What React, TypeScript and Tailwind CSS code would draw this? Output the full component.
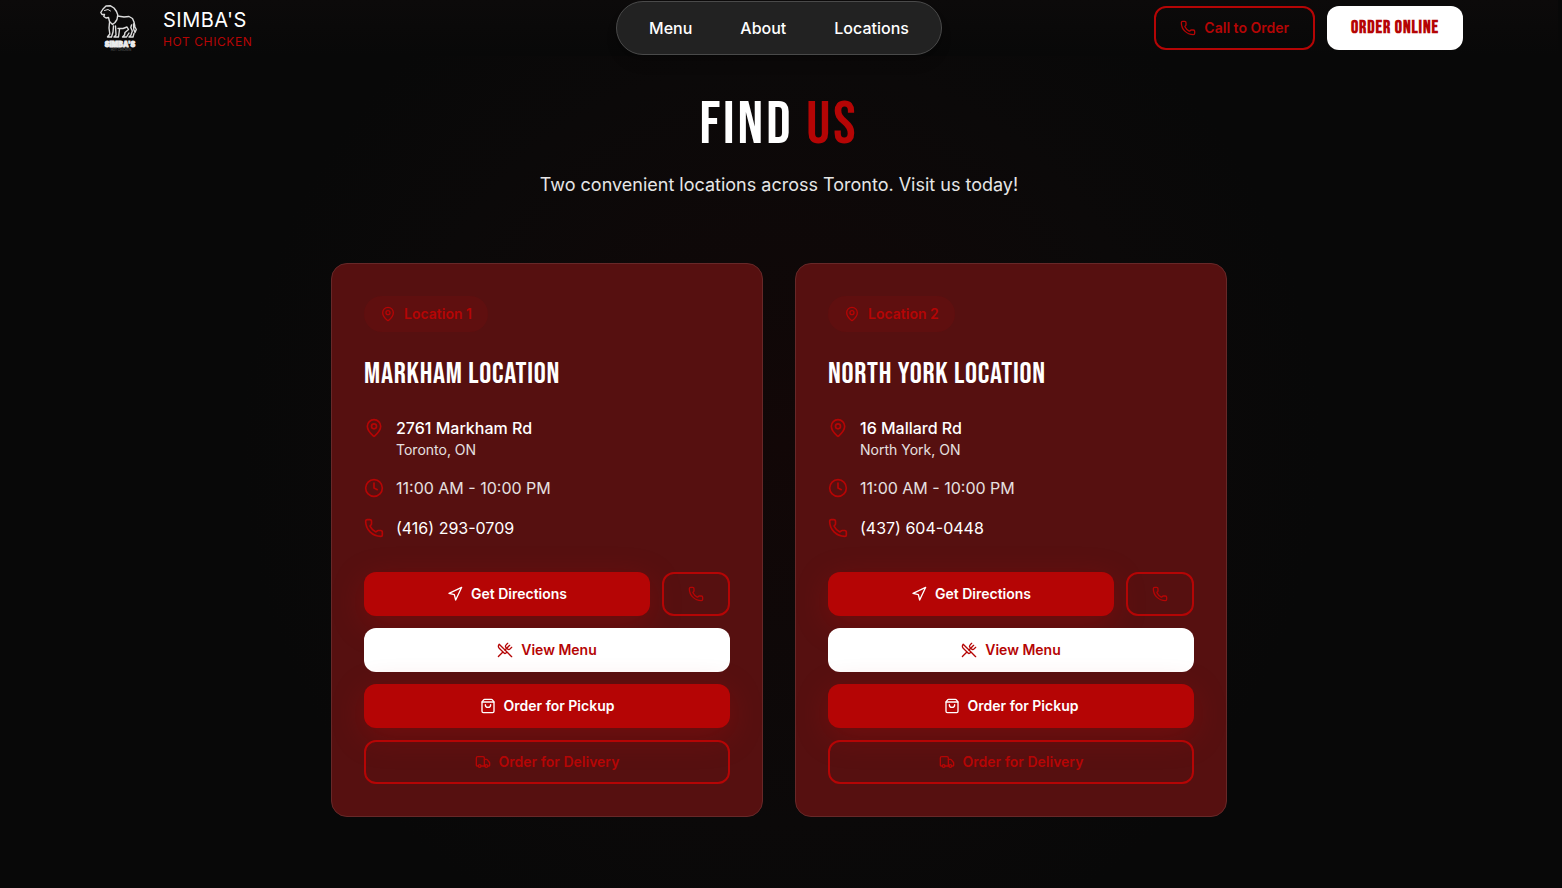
import React from "react";
import { Clock, MapPin, Navigation, Phone, ShoppingBag, Truck, UtensilsCrossed } from "lucide-react";

const display = "font-['Bebas_Neue','Liberation_Sans_Narrow',sans-serif]";

const buttonBase = "flex h-11 items-center justify-center gap-2 rounded-xl px-6 text-sm font-semibold";
const primary = "bg-[#b50505] text-white shadow-[0_8px_32px_rgba(181,5,5,0.3)]";
const outline = "border-2 border-[#b50505] text-[#b50505]";
const light = "bg-white text-[#b50505]";

const navItems = ["Menu", "About", "Locations"];

const locations = [
    {
        id: 1,
        name: "Markham Location",
        street: "2761 Markham Rd",
        city: "Toronto, ON",
        hours: "11:00 AM - 10:00 PM",
        phone: "(416) 293-0709",
    },
    {
        id: 2,
        name: "North York Location",
        street: "16 Mallard Rd",
        city: "North York, ON",
        hours: "11:00 AM - 10:00 PM",
        phone: "(437) 604-0448",
    },
];

function LionLogo() {
    return (
        <svg viewBox="0 0 50 56" className="h-14 w-[50px] shrink-0" fill="none" aria-hidden="true">
            <g stroke="#dcdcdc" strokeWidth="1.4" strokeLinecap="round" strokeLinejoin="round">
                {/* Head and mane */}
                <path d="M8 9 L11 6 L15.5 5.8 L19 8 L21.5 11.5 L22.8 15 L22 19.5 L20 22.5 L17.5 24.5 L14.5 21.5 L13.5 17.5 L11 18 L8.8 16.5 L9.5 14.5 L7 14.5 L5.8 12.5 Z" />
                <path d="M9.5 10.5 L13 9.5 L15.5 11" strokeWidth="1" />
                {/* Back, tail and legs */}
                <path d="M22.5 16 L29 17 L34 16.5 L37.5 18.5 L39 22 L40 27 L41.3 29.5 L40 32.5 L38.8 29.5 L38.5 24" />
                <path d="M14.5 22.5 L14 28 L14.8 34 L12.5 37 H16.5 L18 32 L18.5 26 M20.5 26 L21 35 L19 37 H23.5 L24.5 29.5" />
                <path d="M23 28.5 L28 28.5 L32 27 L33.5 29.5 L30 32.5 L29.5 35 L27.5 37 H31.5 L34 33 M36.5 25 L35.8 27.5 L37.3 31 L36 35 L34 37 H38 L39 33.5" />
            </g>
            <text x="25" y="47" textAnchor="middle" fontFamily="Inter, sans-serif" fontSize="7" fontWeight="900" fill="#eee" stroke="#eee" strokeWidth="0.8">SIMBA'S</text>
            <text x="26" y="51" textAnchor="middle" fontFamily="Inter, sans-serif" fontSize="3" fill="#666">HOT CHICKEN</text>
        </svg>
    );
}

function Header() {
    return (
        <header className="bg-gradient-to-b from-[#0c0a0a] to-[#080808]">
            <div className="mx-auto grid h-14 max-w-[1400px] grid-cols-[1fr_auto_1fr] items-center px-4">
                <a href="#home" className="flex items-center gap-[18px]">
                    <LionLogo />
                    <span className="flex flex-col pt-1">
                        <span className="text-xl leading-6 tracking-wide text-white">SIMBA'S</span>
                        <span className="text-xs leading-5 tracking-wider text-[#b50505]">HOT CHICKEN</span>
                    </span>
                </a>
                <nav className="flex h-[54px] items-center gap-12 rounded-full border border-[#4a4a4a] bg-[#222] px-8 shadow-lg">
                    {navItems.map((item) => (
                        <a key={item} href={`#${item.toLowerCase()}`} className="font-medium text-white">{item}</a>
                    ))}
                </nav>
                <div className="flex items-center justify-end gap-3">
                    <button type="button" className={`${buttonBase} ${outline}`}>
                        <Phone className="h-4 w-4" />
                        Call to Order
                    </button>
                    <button type="button" className={`flex h-11 items-center justify-center rounded-xl px-6 text-lg font-bold tracking-wider ${display} ${light}`}>
                        ORDER ONLINE
                    </button>
                </div>
            </div>
        </header>
    );
}

function LocationCard({ location }: { location: (typeof locations)[number] }) {
    return (
        <article className="rounded-2xl border border-[#672828] bg-[#561010] p-8">
            <div className="mb-6 flex w-fit items-center gap-2 rounded-full bg-[#b50505]/10 px-4 py-2 text-sm font-semibold text-[#b50505]">
                <MapPin className="h-4 w-4" />
                Location {location.id}
            </div>
            <h2 className={`mb-6 text-3xl leading-9 tracking-wide text-white uppercase ${display}`}>{location.name}</h2>

            <div className="mb-8 space-y-4">
                <div className="flex items-start gap-3">
                    <MapPin className="mt-0.5 h-5 w-5 text-[#b50505]" />
                    <div>
                        <p className="font-medium text-white">{location.street}</p>
                        <p className="text-sm text-[#e6e0e0]">{location.city}</p>
                    </div>
                </div>
                <div className="flex items-center gap-3">
                    <Clock className="h-5 w-5 text-[#b50505]" />
                    <p className="text-[#e6e0e0]">{location.hours}</p>
                </div>
                <div className="flex items-center gap-3">
                    <Phone className="h-5 w-5 text-[#b50505]" />
                    <a href={`tel:${location.phone}`} className="text-white">{location.phone}</a>
                </div>
            </div>

            <div className="flex flex-col gap-3">
                <div className="flex gap-3">
                    <button type="button" className={`flex-1 ${buttonBase} ${primary}`}>
                        <Navigation className="h-4 w-4" />
                        Get Directions
                    </button>
                    <button type="button" aria-label="Call" className={`${buttonBase} ${outline}`}>
                        <Phone className="h-4 w-4" />
                    </button>
                </div>
                <button type="button" className={`${buttonBase} ${light}`}>
                    <UtensilsCrossed className="h-4 w-4" />
                    View Menu
                </button>
                <button type="button" className={`${buttonBase} ${primary}`}>
                    <ShoppingBag className="h-4 w-4" />
                    Order for Pickup
                </button>
                <button type="button" className={`${buttonBase} ${outline}`}>
                    <Truck className="h-4 w-4" />
                    Order for Delivery
                </button>
            </div>
        </article>
    );
}

export default function App() {
    return (
        <div className="min-h-screen bg-[#080808] bg-[radial-gradient(circle_at_50%_50%,#120707_0%,#0b0909_380px,#080808_540px)] pr-1 font-['Inter',sans-serif]">
            <Header />
            <main className="px-4 pt-[39px] pb-[71px]">
                <div className="mb-[62px] text-center">
                    <h1 className={`mb-[14px] text-6xl leading-[60px] tracking-wider text-white ${display}`}>
                        FIND <span className="text-[#b50505]">US</span>
                    </h1>
                    <p className="text-lg leading-8 text-[#e6e6e6]">Two convenient locations across Toronto. Visit us today!</p>
                </div>
                <div className="mx-auto grid max-w-4xl grid-cols-1 gap-8 md:grid-cols-2">
                    {locations.map((location) => (
                        <LocationCard key={location.id} location={location} />
                    ))}
                </div>
            </main>
        </div>
    );
}
